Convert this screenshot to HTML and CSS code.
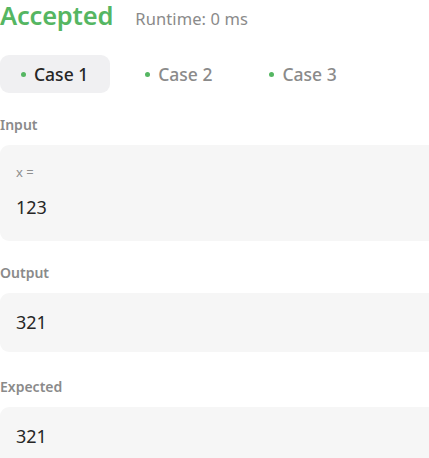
FILE: index.html
```html
<!DOCTYPE html>
<html>
<head>
<meta charset="utf-8">
<link rel="stylesheet" href="styles.css">
</head>
<body>
<div class="page">
  <div class="header">
    <span class="status">Accepted</span>
    <span class="runtime">Runtime: 0 ms</span>
  </div>
  <div class="tabs">
    <div class="tab active"><span class="dot"></span>Case 1</div>
    <div class="tab"><span class="dot"></span>Case 2</div>
    <div class="tab"><span class="dot"></span>Case 3</div>
  </div>
  <div class="label label-input">Input</div>
  <div class="box box-input">
    <div class="var">x =</div>
    <div class="val">123</div>
  </div>
  <div class="label">Output</div>
  <div class="box"><div class="val">321</div></div>
  <div class="label label-exp">Expected</div>
  <div class="box"><div class="val">321</div></div>
</div>
</body>
</html>
```
FILE: styles.css
```css
html, body {
  margin: 0;
  padding: 0;
  background: #fff;
  overflow: hidden;
}
.page {
  font-family: "Noto Sans", "Open Sans", sans-serif;
  width: 460px;
}
.header {
  display: flex;
  align-items: baseline;
  gap: 22px;
  height: 30px;
  padding-top: 2px;
  line-height: 26px;
}
.status {
  font-size: 25.5px;
  font-weight: 600;
  color: #55b662;
  letter-spacing: -0.2px;
}
.runtime {
  font-size: 16.5px;
  color: #8a8a8a;
  letter-spacing: 0.1px;
}
.tabs {
  display: flex;
  margin-top: 23px;
  gap: 14px;
}
.tab {
  display: flex;
  align-items: center;
  height: 38px;
  padding: 0 22px 0 21px;
  font-size: 17.5px;
  font-weight: 500;
  color: #8a8a8a;
  border-radius: 9px;
}
.tab.active {
  background: #f0f0f2;
  color: #262626;
}
.dot {
  width: 5px;
  height: 5px;
  border-radius: 50%;
  background: #55b662;
  margin-right: 8px;
}
.label {
  font-size: 14px;
  font-weight: 600;
  color: #8a8a8a;
  margin-top: 22px;
  margin-bottom: 11px;
  line-height: 19px;
}
.label-input {
  margin-top: 22px;
}
.label-exp {
  margin-top: 25px;
}
.box {
  background: #f6f6f6;
  border-radius: 9px;
  padding: 13px 16px 14px;
}
.box-input {
  padding-top: 18px;
  padding-bottom: 18px;
}
.var {
  font-size: 13px;
  color: #8f8f8f;
  line-height: 18px;
  margin-bottom: 10px;
}
.val {
  font-size: 18px;
  color: #262626;
  line-height: 32px;
}
```
